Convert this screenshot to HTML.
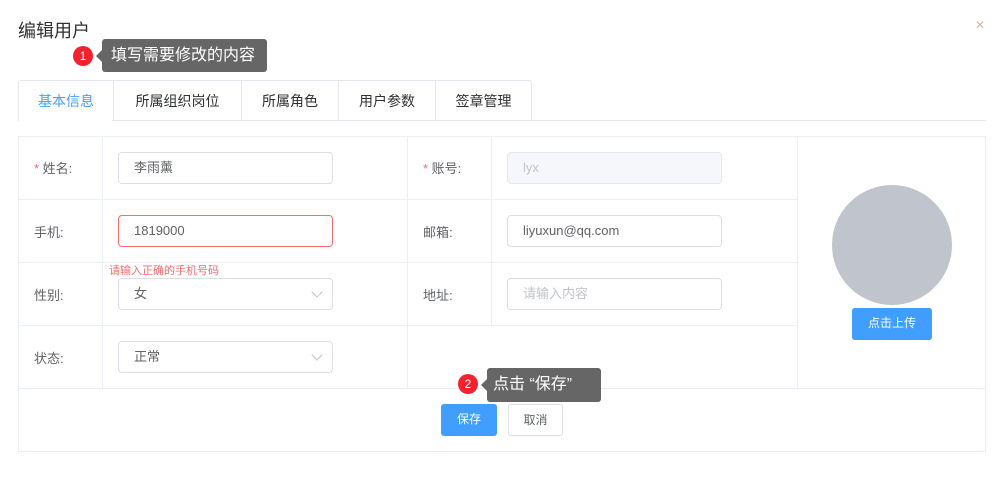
<!DOCTYPE html>
<html><head><meta charset="utf-8"><style>
*{margin:0;padding:0;box-sizing:border-box}
body{width:1006px;height:482px;background:#fff;font-family:"Liberation Sans","Noto Sans CJK SC",sans-serif;color:#606266;position:relative;overflow:hidden;font-size:13px}
.a{position:absolute}
.title{left:18px;top:17px;font-size:18px;color:#303133}
.close{left:975px;top:18px;font-size:12px;color:#c8b8a8}
.tip{background:#666;color:#fff;font-size:16px;border-radius:3px;line-height:33px;padding-left:9px}
.tip:before{content:"";position:absolute;left:-6px;top:11px;border:6px solid transparent;border-left:0;border-right-color:#666}
.badge{width:20px;height:20px;border-radius:50%;background:#f5222d;color:#fff;font-size:12px;text-align:center;line-height:20px}
.tabs{left:18px;top:80px;height:41px;border:1px solid #e4e7ed;border-bottom:none;display:flex;border-radius:3px 3px 0 0}
.tabs div{height:40px;line-height:40px;text-align:center;font-size:14px;color:#303133;border-left:1px solid #e4e7ed}
.tabs div:first-child{border-left:none;color:#409eff}
.line2{left:112px;top:120px;width:874px;height:1px;background:#e4e7ed}
.hl{height:1px;background:#ebeef5}
.vl{width:1px;background:#ebeef5}
.lbl{font-size:13px;color:#606266}
.req{color:#f56c6c}
.inp{width:215px;height:32px;border:1px solid #dcdfe6;border-radius:4px;padding-left:15px;line-height:30px;font-size:13px;color:#606266}
.chev{position:absolute;right:11px;top:9px;width:8px;height:8px;border-right:1px solid #c0c4cc;border-bottom:1px solid #c0c4cc;transform:rotate(45deg)}
.btn{height:32px;border-radius:3px;text-align:center;line-height:31px;font-size:12px}
</style></head><body>
<div class="a title">编辑用户</div>
<div class="a close">✕</div>
<div class="a badge" style="left:73px;top:46px">1</div>
<div class="a tip" style="left:102px;top:39px;width:165px">填写需要修改的内容</div>

<div class="a tabs"><div style="width:94px">基本信息</div><div style="width:128px">所属组织岗位</div><div style="width:97px">所属角色</div><div style="width:97px">用户参数</div><div style="width:96px">签章管理</div></div>
<div class="a line2"></div>

<div class="a" style="left:18px;top:136px;width:968px;height:316px;border:1px solid #ebeef5"></div>
<div class="a hl" style="left:18px;top:199px;width:779px"></div>
<div class="a hl" style="left:18px;top:262px;width:779px"></div>
<div class="a hl" style="left:18px;top:325px;width:779px"></div>
<div class="a hl" style="left:18px;top:388px;width:968px"></div>
<div class="a vl" style="left:102px;top:136px;height:252px"></div>
<div class="a vl" style="left:407px;top:136px;height:252px"></div>
<div class="a vl" style="left:491px;top:136px;height:189px"></div>
<div class="a vl" style="left:797px;top:136px;height:252px"></div>

<div class="a lbl" style="left:34px;top:158px"><span class="req">* </span>姓名:</div>
<div class="a lbl" style="left:34px;top:222px">手机:</div>
<div class="a lbl" style="left:34px;top:285px">性别:</div>
<div class="a lbl" style="left:34px;top:348px">状态:</div>
<div class="a lbl" style="left:423px;top:158px"><span class="req">* </span>账号:</div>
<div class="a lbl" style="left:423px;top:222px">邮箱:</div>
<div class="a lbl" style="left:423px;top:285px">地址:</div>

<div class="a inp" style="left:118px;top:152px">李雨薰</div>
<div class="a inp" style="left:118px;top:215px;border-color:#f56c6c">1819000</div>
<div class="a" style="left:109px;top:262px;font-size:11px;color:#f56c6c">请输入正确的手机号码</div>
<div class="a inp" style="left:118px;top:278px">女<span class="chev"></span></div>
<div class="a inp" style="left:118px;top:341px">正常<span class="chev"></span></div>
<div class="a inp" style="left:507px;top:152px;background:#f5f7fa;border-color:#e4e7ed;color:#c0c4cc">lyx</div>
<div class="a inp" style="left:507px;top:215px">liyuxun@qq.com</div>
<div class="a inp" style="left:507px;top:278px;color:#c0c4cc">请输入内容</div>

<div class="a" style="left:832px;top:185px;width:120px;height:120px;border-radius:50%;background:#c0c4cc"></div>
<div class="a btn" style="left:852px;top:308px;width:80px;background:#409eff;color:#fff">点击上传</div>

<div class="a btn" style="left:441px;top:404px;width:56px;background:#409eff;color:#fff">保存</div>
<div class="a btn" style="left:508px;top:404px;width:55px;border:1px solid #dcdfe6;color:#606266">取消</div>

<div class="a badge" style="left:458px;top:374px">2</div>
<div class="a tip" style="left:487px;top:368px;width:114px;height:34px;padding-left:6px">点击 “保存”</div>
</body></html>
